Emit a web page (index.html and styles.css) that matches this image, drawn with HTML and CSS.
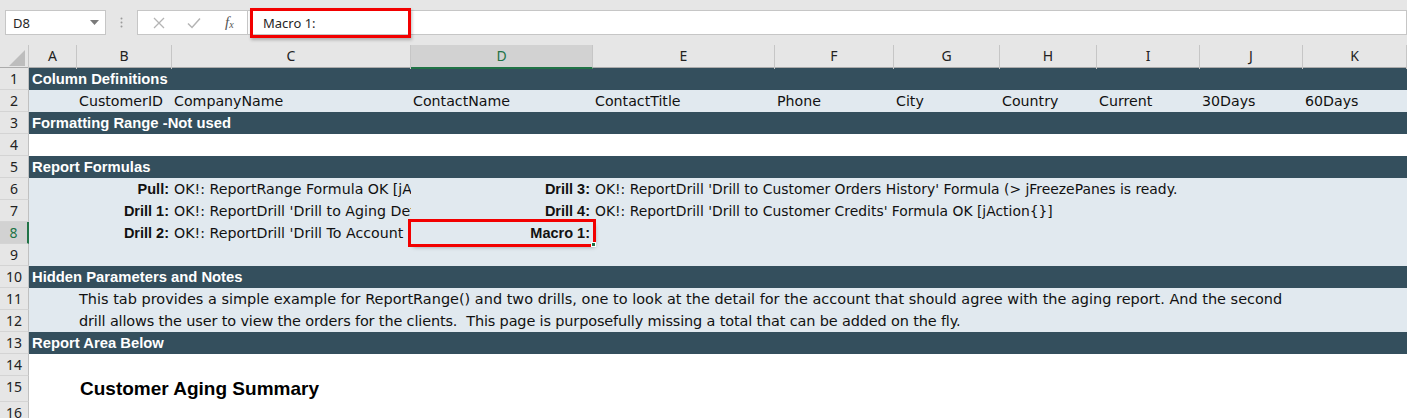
FILE: index.html
```html
<!DOCTYPE html>
<html>
<head>
<meta charset="utf-8">
<link rel="stylesheet" href="styles.css">
</head>
<body>
<div class="fbar">
  <div class="namebox"><span class="nbtext">D8</span><svg class="nbarrow" width="9" height="5" viewBox="0 0 9 5"><path d="M0 0h9L4.5 5z" fill="#7a7a7a"/></svg></div>
  <div class="sep"><svg width="3" height="11" viewBox="0 0 3 11"><circle cx="1.5" cy="1.5" r="1" fill="#9a9a9a"/><circle cx="1.5" cy="5.5" r="1" fill="#9a9a9a"/><circle cx="1.5" cy="9.5" r="1" fill="#9a9a9a"/></svg></div>
  <div class="fbtns">
    <svg class="ic" width="12" height="12" viewBox="0 0 12 12"><path d="M1 1l10 10M11 1L1 11" stroke="#b4b4b4" stroke-width="1.3" fill="none"/></svg>
    <svg class="ic" width="14" height="12" viewBox="0 0 14 12"><path d="M1 6.5l4 4L13 1.5" stroke="#b4b4b4" stroke-width="1.5" fill="none"/></svg>
    <span class="fx">f<sub>x</sub></span>
  </div>
  <div class="finput"><span class="hlbox">Macro 1:</span></div>
</div>

<div class="sheet">
  <div class="r hdr">
    <div class="corner"><svg width="16" height="16" viewBox="0 0 16 16"><path d="M16 0V16H0z" fill="#bdbdbd"/></svg></div>
    <div class="ch">A</div><div class="ch">B</div><div class="ch">C</div><div class="ch sel">D</div><div class="ch">E</div><div class="ch">F</div><div class="ch">G</div><div class="ch">H</div><div class="ch">I</div><div class="ch">J</div><div class="ch">K</div>
  </div>

  <div class="r dark"><div class="rh">1</div><div class="band">Column Definitions</div></div>

  <div class="r light">
    <div class="rh">2</div><div class="c"></div>
    <div class="c">CustomerID</div><div class="c">CompanyName</div><div class="c">ContactName</div><div class="c">ContactTitle</div><div class="c">Phone</div><div class="c">City</div><div class="c">Country</div><div class="c">Current</div><div class="c">30Days</div><div class="c">60Days</div>
  </div>

  <div class="r dark"><div class="rh">3</div><div class="band">Formatting Range -Not used</div></div>
  <div class="r white"><div class="rh">4</div></div>
  <div class="r dark"><div class="rh">5</div><div class="band">Report Formulas</div></div>

  <div class="r light">
    <div class="rh">6</div>
    <div class="c lab ab">Pull:</div>
    <div class="c clip">OK!: ReportRange Formula OK [jAction{}]</div>
    <div class="c lab">Drill 3:</div>
    <div class="c over val">OK!: ReportDrill 'Drill to Customer Orders History' Formula (&gt; jFreezePanes is ready.</div>
  </div>

  <div class="r light">
    <div class="rh">7</div>
    <div class="c lab ab">Drill 1:</div>
    <div class="c clip">OK!: ReportDrill 'Drill to Aging Detail' Formula OK</div>
    <div class="c lab">Drill 4:</div>
    <div class="c over val">OK!: ReportDrill 'Drill to Customer Credits' Formula OK [jAction{}]</div>
  </div>

  <div class="r light">
    <div class="rh rsel">8</div>
    <div class="c lab ab">Drill 2:</div>
    <div class="c clip">OK!: ReportDrill 'Drill To Account Detail' Formula OK</div>
    <div class="c lab active">Macro 1:<span class="handle"></span></div>
  </div>

  <div class="r light"><div class="rh">9</div></div>
  <div class="r dark"><div class="rh">10</div><div class="band">Hidden Parameters and Notes</div></div>

  <div class="r light">
    <div class="rh">11</div><div class="c"></div>
    <div class="c over note">This tab provides a simple example for ReportRange() and two drills, one to look at the detail for the account that should agree with the aging report. And the second</div>
  </div>
  <div class="r light">
    <div class="rh">12</div><div class="c"></div>
    <div class="c over note note2">drill allows the user to view the orders for the clients. &nbsp;This page is purposefully missing a total that can be added on the fly.</div>
  </div>

  <div class="r dark"><div class="rh">13</div><div class="band">Report Area Below</div></div>
  <div class="r white"><div class="rh">14</div></div>
  <div class="r white tall">
    <div class="rh">15</div><div class="c"></div>
    <div class="c over title">Customer Aging Summary</div>
  </div>
  <div class="r white"><div class="rh">16</div></div>
</div>
</body>
</html>
```

FILE: styles.css
```css
* { box-sizing: border-box; }
html, body { margin: 0; padding: 0; background: #fff; overflow: hidden; width: 1407px; height: 418px; }

.fbar {
  height: 45px;
  background: #e6e6e6;
  display: flex;
  align-items: flex-start;
  padding-top: 10px;
  padding-left: 5px;
  font-family: "Noto Sans", "Open Sans", sans-serif;
  font-size: 13px;
  color: #222;
}
.namebox {
  width: 101px;
  height: 25px;
  background: #fff;
  border: 1px solid #c6c6c6;
  display: flex;
  align-items: center;
  justify-content: space-between;
  padding: 0 6px 0 7px;
}
.nbtext { color: #262626; }
.sep { width: 31px; height: 25px; display: flex; align-items: center; justify-content: center; }
.fbtns {
  width: 110px;
  height: 25px;
  background: #fff;
  border: 1px solid #c6c6c6;
  border-right: none;
  display: flex;
  align-items: center;
  padding-left: 15px;
  gap: 22px;
}
.fx { font-family: "Liberation Serif", serif; font-style: italic; font-size: 15px; color: #555; margin-left: 2px; }
.fx sub { font-size: 10px; vertical-align: -1px; }
.finput {
  flex: 1;
  height: 25px;
  background: #fff;
  border: 1px solid #c6c6c6;
  display: flex;
  align-items: center;
}
.hlbox {
  width: 161px;
  height: 30px;
  margin-left: 2px;
  border: 3px solid #f20000;
  display: flex;
  align-items: center;
  padding-left: 10px;
  color: #262626;
  font-size: 13px;
  box-shadow: 1px 2px 3px rgba(0,0,0,0.25);
}

.sheet { font-family: "DejaVu Sans", sans-serif; font-size: 14.2px; color: #111; }
.r {
  display: grid;
  grid-template-columns: 29px 48px 95px 239px 182px 182px 119px 106px 97px 103px 103px 104px;
  height: 22px;
}
.r.tall { height: 26px; }
.hdr { height: 23px; background: #e6e6e6; border-bottom: 1px solid #ababab; }
.corner { display: flex; align-items: flex-end; justify-content: flex-end; padding: 0 3px 3px 0; border-right: 1px solid #c6c6c6; }
.ch {
  font-family: "Noto Sans", "Open Sans", sans-serif;
  font-size: 14px;
  color: #222;
  text-align: center;
  line-height: 22px;
  border-right: 1px solid #c6c6c6;
}
.ch.sel { background: #d2d2d2; color: #217346; border-bottom: 2px solid #217346; }

.rh {
  background: #e6e6e6;
  border-right: 1px solid #c0c0c0;
  border-bottom: 1px solid #d4d4d4;
  font-family: "Noto Sans", "Open Sans", sans-serif;
  font-size: 14px;
  color: #222;
  text-align: center;
  line-height: 21px;
}
.rh.rsel { background: #d2d2d2; color: #217346; border-right: 2px solid #217346; }

.dark { background: #344f5d; }
.light { background: #e1e9ef; }
.white { background: #fff; }

.band {
  grid-column: 2 / -1;
  color: #fff;
  font-family: "Liberation Sans", Arial, sans-serif;
  font-weight: bold;
  font-size: 14.8px;
  line-height: 22px;
  padding-left: 3px;
  white-space: nowrap;
}
.c {
  line-height: 22px;
  white-space: nowrap;
  padding-left: 2px;
  min-width: 0;
}
.c.lab {
  text-align: right;
  font-family: "Liberation Sans", Arial, sans-serif;
  font-weight: bold;
  font-size: 14.5px;
  padding: 0 3px 0 0;
}
.c.ab { grid-column: 2 / 4; }
.c.clip { overflow: hidden; }
.c.over { overflow: visible; }
.c.val { font-size: 13.9px; }
.c.note { grid-column: 3 / -1; font-size: 14.47px; }
.c.note2 { letter-spacing: -0.15px; }
.c.title {
  grid-column: 3 / -1;
  font-family: "Liberation Sans", Arial, sans-serif;
  font-weight: bold;
  font-size: 19px;
  line-height: 26px;
  color: #000;
  padding-left: 3px;
}
.c.active {
  position: relative;
  outline: 3px solid #f20000;
  outline-offset: 0px;
  box-shadow: 2px 3px 4px rgba(0,0,0,0.35);
}
.handle {
  position: absolute;
  right: -3px;
  bottom: -3px;
  width: 5px;
  height: 5px;
  background: #217346;
  border: 1px solid #fff;
}
```
